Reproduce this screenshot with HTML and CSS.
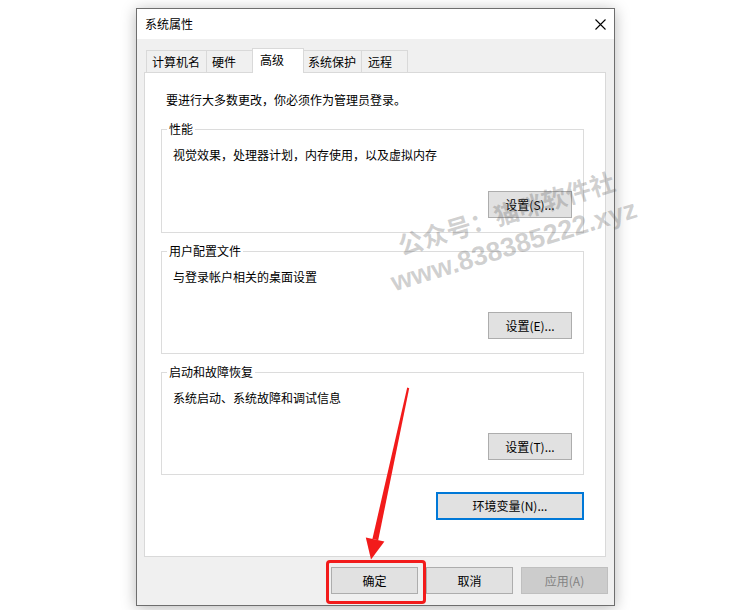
FILE: index.html
```html
<!DOCTYPE html>
<html lang="zh-CN">
<head>
<meta charset="utf-8">
<title>系统属性</title>
<link rel="stylesheet" href="styles.css">
</head>
<body>
<div class="stage">
  <div class="window">
    <div class="titlebar">
      <span class="title">系统属性</span>
      <svg class="close" width="11" height="11" viewBox="0 0 11 11"><path d="M0.5 0.5L10.5 10.5M10.5 0.5L0.5 10.5" stroke="#000" stroke-width="1.1" fill="none"/></svg>
    </div>
    <div class="content">
      <div class="tabs">
        <div class="tab tab-w61">计算机名</div>
        <div class="tab tab-w47">硬件</div>
        <div class="tab tab-active">高级</div>
        <div class="tab tab-w59">系统保护</div>
        <div class="tab tab-w47 tab-last">远程</div>
      </div>
      <div class="panel">
        <div class="intro">要进行大多数更改，你必须作为管理员登录。</div>
        <div class="group group-first">
          <span class="legend">性能</span>
          <div class="group-text">视觉效果，处理器计划，内存使用，以及虚拟内存</div>
          <button class="btn btn-set">设置(S)...</button>
        </div>
        <div class="group">
          <span class="legend">用户配置文件</span>
          <div class="group-text">与登录帐户相关的桌面设置</div>
          <button class="btn btn-set">设置(E)...</button>
        </div>
        <div class="group">
          <span class="legend">启动和故障恢复</span>
          <div class="group-text">系统启动、系统故障和调试信息</div>
          <button class="btn btn-set">设置(T)...</button>
        </div>
        <button class="btn btn-env">环境变量(N)...</button>
      </div>
      <div class="actions">
        <button class="btn btn-action">确定</button>
        <button class="btn btn-action">取消</button>
        <button class="btn btn-action btn-disabled">应用(A)</button>
      </div>
    </div>
  </div>

  <div class="watermark wm-line1">公众号：猫咪软件社</div>
  <div class="watermark wm-line2">www.838385222.xyz</div>

  <div class="highlight"></div>
  <svg class="arrow" width="738" height="610" viewBox="0 0 738 610">
    <polygon points="407.2,387.6 409.2,388.2 378.2,540.2 372.4,539" fill="#f21b1b"/>
    <polygon points="365.8,537.4 384.4,541.4 371,559.5" fill="#f21b1b"/>
  </svg>
</div>
</body>
</html>
```

FILE: styles.css
```css
* { box-sizing: border-box; }

html, body {
  margin: 0;
  padding: 0;
  background: #ffffff;
}

body {
  font-family: "Noto Sans CJK SC", "Noto Sans", sans-serif;
  font-size: 12px;
  color: #000;
}

.stage {
  position: relative;
  width: 738px;
  height: 610px;
  overflow: hidden;
  padding: 8px 0 0 136px;
  background: #ffffff;
}

.window {
  width: 479px;
  height: 598px;
  border: 1px solid #6e6e6e;
  background: #f0f0f0;
  display: flex;
  flex-direction: column;
  box-shadow: 0 2px 14px rgba(0, 0, 0, 0.28);
}

.titlebar {
  height: 30px;
  flex: none;
  background: #ffffff;
  display: flex;
  align-items: center;
  justify-content: space-between;
  padding: 0 8px 0 8px;
}

.title {
  line-height: 16px;
}

.close {
  display: block;
}

.content {
  flex: 1;
  display: flex;
  flex-direction: column;
  padding: 9px 8px 11px 7px;
}

.tabs {
  display: flex;
  align-items: flex-end;
  height: 24px;
  flex: none;
  padding-left: 2px;
}

.tab {
  height: 22px;
  border: 1px solid #d9d9d9;
  border-bottom: none;
  background: #f0f0f0;
  margin-right: -1px;
  padding-left: 5px;
  display: flex;
  align-items: center;
  line-height: 16px;
  white-space: nowrap;
}

.tab-w61 { width: 61px; }
.tab-w47 { width: 47px; }
.tab-w59 { width: 59px; padding-left: 4px; }
.tab-last { padding-left: 6px; }

.tab-active {
  width: 52px;
  height: 25px;
  margin-bottom: -1px;
  background: #ffffff;
  padding-left: 7px;
  padding-bottom: 2px;
  position: relative;
  z-index: 1;
}

.panel {
  flex: 1;
  background: #ffffff;
  border: 1px solid #d9d9d9;
  padding: 19px 21px 0 16px;
  display: flex;
  flex-direction: column;
}

.intro {
  line-height: 16px;
  margin-left: 5px;
}

.group {
  position: relative;
  height: 103px;
  margin-top: 18px;
  border: 1px solid #dcdcdc;
  padding: 17px 11px 14px 11px;
  display: flex;
  flex-direction: column;
}

.group-first {
  height: 104px;
  margin-top: 21px;
}

.legend {
  position: absolute;
  top: -9px;
  left: 5px;
  padding: 0 2px;
  line-height: 16px;
  background: #ffffff;
}

.group-text {
  line-height: 16px;
}

.btn {
  font-family: "Noto Sans CJK SC", "Noto Sans", sans-serif;
  font-size: 12px;
  color: #000;
  background: #e1e1e1;
  border: 1px solid #adadad;
  border-radius: 0;
  padding: 0;
  margin: 0;
  line-height: 16px;
  text-align: center;
}

.btn-set {
  margin-top: auto;
  align-self: flex-end;
  width: 84px;
  height: 27px;
}

.btn-env {
  align-self: flex-end;
  margin-top: 17px;
  width: 148px;
  height: 28px;
  border: 2px solid #0078d7;
}

.actions {
  flex: none;
  display: flex;
  justify-content: flex-end;
  gap: 8px;
  margin-top: 10px;
  margin-right: -2px;
  height: 27px;
}

.btn-action {
  width: 87px;
  height: 27px;
}

.btn-disabled {
  background: #cccccc;
  border-color: #bfbfbf;
  color: #838383;
}

.watermark {
  position: absolute;
  font-family: "Liberation Sans", "Noto Sans CJK SC", sans-serif;
  font-weight: bold;
  color: rgba(90, 90, 90, 0.28);
  white-space: nowrap;
  transform: translate(-50%, -50%) rotate(-17deg);
  pointer-events: none;
}

.wm-line1 {
  left: 506px;
  top: 212px;
  font-size: 25px;
  font-family: "Noto Sans CJK SC", sans-serif;
}

.wm-line2 {
  left: 514px;
  top: 246px;
  font-size: 27px;
}

.highlight {
  position: absolute;
  left: 326px;
  top: 560px;
  width: 100px;
  height: 44px;
  border: 3px solid #f21b1b;
  border-radius: 4px;
}

.arrow {
  position: absolute;
  left: 0;
  top: 0;
  pointer-events: none;
}
```
